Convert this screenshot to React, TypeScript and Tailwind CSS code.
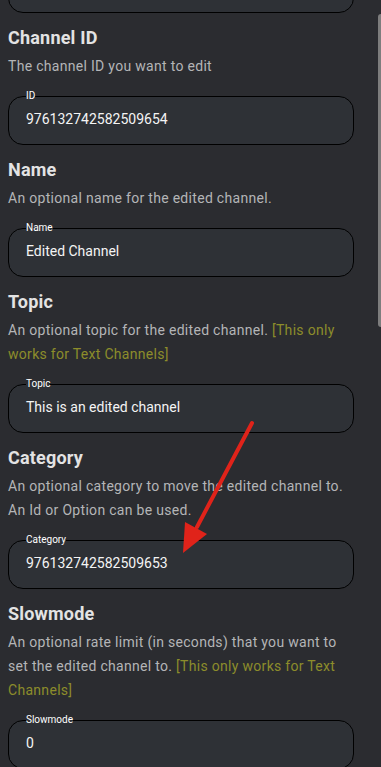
type Field = {
  title: string;
  desc: string;
  note?: string;
  label: string;
  value: string;
};

const fields: Field[] = [
  { title: "Channel ID", desc: "The channel ID you want to edit", label: "ID", value: "976132742582509654" },
  { title: "Name", desc: "An optional name for the edited channel.", label: "Name", value: "Edited Channel" },
  {
    title: "Topic",
    desc: "An optional topic for the edited channel.",
    note: "[This only works for Text Channels]",
    label: "Topic",
    value: "This is an edited channel",
  },
  {
    title: "Category",
    desc: "An optional category to move the edited channel to. An Id or Option can be used.",
    label: "Category",
    value: "976132742582509653",
  },
  {
    title: "Slowmode",
    desc: "An optional rate limit (in seconds) that you want to set the edited channel to.",
    note: "[This only works for Text Channels]",
    label: "Slowmode",
    value: "0",
  },
];

function InputBox({ label, value }: { label: string; value: string }) {
  return (
    <fieldset className="border border-black rounded-[15px] bg-[#2e3136] px-[17px] pb-0">
      <legend className="text-[10px] leading-[12px] text-white">{label}</legend>
      <div className="pt-[7px] pb-[15px] text-[14px] leading-[20px] text-[#f4f4f4]">{value}</div>
    </fieldset>
  );
}

export default function App() {
  return (
    <div
      className="relative h-[767px] w-[381px] overflow-hidden bg-[#2b2c30]"
      style={{ fontFamily: "Roboto, 'Liberation Sans', sans-serif" }}
    >
      <div className="w-[346px] ml-2 -mt-[42px] flex flex-col">
        {/* campo anterior, casi fuera de vista */}
        <InputBox label={"\u00a0"} value={"\u00a0"} />

        {fields.map((f) => (
          <div key={f.title} className="mt-[11px] flex flex-col">
            <h2 className="text-[18px] leading-[28px] font-bold text-[#e3e3e3] tracking-[0.2px]">{f.title}</h2>
            <p className="mt-[2px] text-[14px] leading-[24px] tracking-[0.3px] text-[#b4b5b7]">
              {f.desc}
              {f.note && <span className="text-[#8d8d2b]"> {f.note}</span>}
            </p>
            <div className="mt-[12px]">
              <InputBox label={f.label} value={f.value} />
            </div>
          </div>
        ))}
      </div>

      {/* scrollbar */}
      <div className="absolute right-0 top-[14px] h-[313px] w-[3px] rounded-l-sm bg-[#7d7d7d]" />

      {/* flecha roja */}
      <svg className="absolute left-0 top-0 pointer-events-none" width="381" height="767" viewBox="0 0 381 767">
        <line x1="252" y1="423" x2="197" y2="527" stroke="#e0231a" strokeWidth="4" strokeLinecap="round" />
        <polygon points="183,553 207,534 185,522" fill="#e0231a" />
      </svg>
    </div>
  );
}
